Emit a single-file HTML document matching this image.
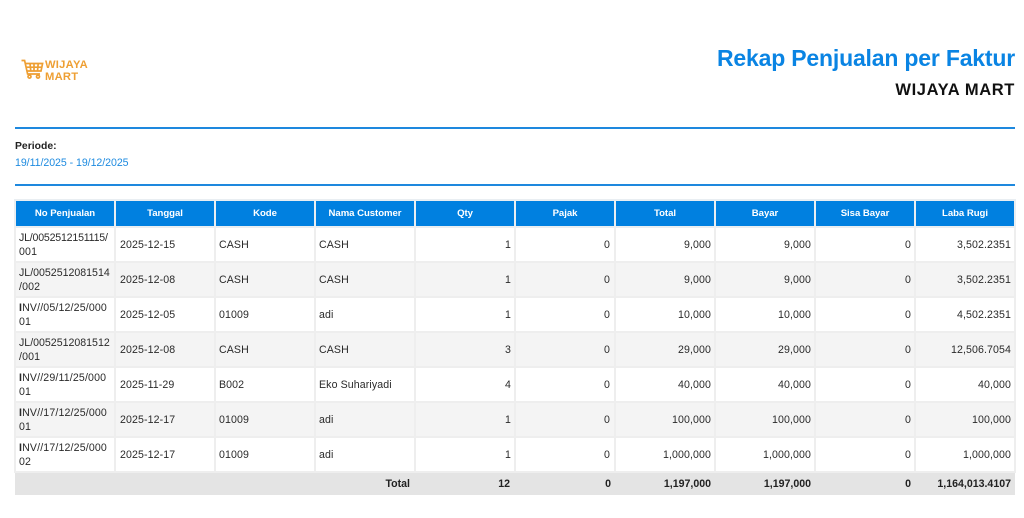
<!DOCTYPE html>
<html><head><meta charset="utf-8">
<style>
html,body{margin:0;padding:0;background:#fff;width:1024px;height:518px;overflow:hidden}
body{font-family:"Liberation Sans",sans-serif;color:#222;position:relative}
.a{position:absolute;white-space:nowrap}
.line{position:absolute;left:15px;width:1000px;height:2px;background:#1e88de}
table{position:absolute;left:14px;top:199px;width:1001px;border-collapse:collapse;table-layout:fixed;font-size:10.6px;letter-spacing:.1px}
th{background:#0080e0;color:#fff;font-size:9.6px;font-weight:bold;height:25px;padding:0;border:2px solid #e9eef2;text-align:center;letter-spacing:-.05px}
td{height:33px;padding:0 4px;border:2px solid #eeeeee;line-height:14px;overflow:hidden;color:#2a2a2a;white-space:nowrap}
tr.z td{background:#f4f4f4}
td.r{text-align:right;padding-right:3px}
td.p{padding-right:4px}
td.k{padding-left:3px}
td.w{padding:0 0 0 3px;letter-spacing:.15px}
td.w span{letter-spacing:-.2px}
td.w i{font-style:normal;letter-spacing:0}
tr.t td{background:#e4e4e4;border:0;height:22px;font-weight:bold;font-size:10.6px;color:#222;letter-spacing:0;padding-right:4px}
tr.t td.s{padding-right:5px}
</style></head><body>
<svg class="a" style="left:21px;top:59px" width="23" height="21" viewBox="0 0 23 21" fill="none" stroke="#ee9f33" stroke-width="1.7">
<path d="M0.5 1.5H3.6L6.6 15H19"/>
<path d="M4.2 4.5H21.6L20 12H5.8"/>
<path d="M4.8 8.2H20.8M9 4.5L9.8 12M13 4.5V12M17.2 4.5L16.5 12"/>
<circle cx="8.5" cy="17.6" r="1.5"/><circle cx="17" cy="17.6" r="1.5"/>
</svg>
<div class="a" style="left:45px;top:60px;font-size:11.2px;font-weight:bold;color:#ee9f33;line-height:11.5px;letter-spacing:.25px">WIJAYA<br>MART</div>
<div class="a" style="right:9px;top:44px;font-size:23px;font-weight:bold;color:#0a84e3;line-height:28px;letter-spacing:-.19px">Rekap Penjualan per Faktur</div>
<div class="a" style="right:9px;top:80px;font-size:16.5px;font-weight:bold;color:#111;line-height:20px;letter-spacing:.62px">WIJAYA MART</div>
<div class="line" style="top:127px"></div>
<div class="a" style="left:15px;top:140px;font-size:10.4px;font-weight:bold;color:#222;line-height:13px">Periode:</div>
<div class="a" style="left:15px;top:156px;font-size:10.6px;color:#1e8be0;line-height:14px;letter-spacing:-.05px">19/11/2025 - 19/12/2025</div>
<div class="line" style="top:184px"></div>
<table>
<colgroup><col style="width:100px"><col style="width:100px"><col style="width:100px"><col style="width:100px"><col style="width:100px"><col style="width:100px"><col style="width:100px"><col style="width:100px"><col style="width:100px"><col style="width:100px"></colgroup>
<tr><th>No Penjualan</th><th>Tanggal</th><th>Kode</th><th>Nama Customer</th><th>Qty</th><th>Pajak</th><th>Total</th><th>Bayar</th><th>Sisa Bayar</th><th>Laba Rugi</th></tr>
<tr><td class="w"><span>JL/0052512151115/</span><br>001</td><td>2025-12-15</td><td class="k">CASH</td><td class="k">CASH</td><td class="r">1</td><td class="r p">0</td><td class="r">9,000</td><td class="r">9,000</td><td class="r">0</td><td class="r">3,502.2351</td></tr>
<tr class="z"><td class="w"><i>JL/0052512081514</i><br>/002</td><td>2025-12-08</td><td class="k">CASH</td><td class="k">CASH</td><td class="r">1</td><td class="r p">0</td><td class="r">9,000</td><td class="r">9,000</td><td class="r">0</td><td class="r">3,502.2351</td></tr>
<tr><td class="w"><b>I</b>NV//05/12/25/000<br>01</td><td>2025-12-05</td><td class="k">01009</td><td class="k">adi</td><td class="r">1</td><td class="r p">0</td><td class="r">10,000</td><td class="r">10,000</td><td class="r">0</td><td class="r">4,502.2351</td></tr>
<tr class="z"><td class="w"><i>JL/0052512081512</i><br>/001</td><td>2025-12-08</td><td class="k">CASH</td><td class="k">CASH</td><td class="r">3</td><td class="r p">0</td><td class="r">29,000</td><td class="r">29,000</td><td class="r">0</td><td class="r">12,506.7054</td></tr>
<tr><td class="w"><b>I</b>NV//29/11/25/000<br>01</td><td>2025-11-29</td><td class="k">B002</td><td class="k">Eko Suhariyadi</td><td class="r">4</td><td class="r p">0</td><td class="r">40,000</td><td class="r">40,000</td><td class="r">0</td><td class="r">40,000</td></tr>
<tr class="z"><td class="w"><b>I</b>NV//17/12/25/000<br>01</td><td>2025-12-17</td><td class="k">01009</td><td class="k">adi</td><td class="r">1</td><td class="r p">0</td><td class="r">100,000</td><td class="r">100,000</td><td class="r">0</td><td class="r">100,000</td></tr>
<tr><td class="w"><b>I</b>NV//17/12/25/000<br>02</td><td>2025-12-17</td><td class="k">01009</td><td class="k">adi</td><td class="r">1</td><td class="r p">0</td><td class="r">1,000,000</td><td class="r">1,000,000</td><td class="r">0</td><td class="r">1,000,000</td></tr>
<tr class="t"><td colspan="4" class="r s">Total</td><td class="r s">12</td><td class="r">0</td><td class="r">1,197,000</td><td class="r">1,197,000</td><td class="r">0</td><td class="r">1,164,013.4107</td></tr>
</table>
</body></html>
